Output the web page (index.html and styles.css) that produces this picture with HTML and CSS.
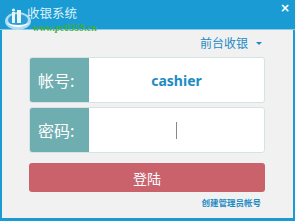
FILE: index.html
```html
<!DOCTYPE html>
<html>
<head>
<meta charset="utf-8">
<link rel="stylesheet" href="styles.css">
</head>
<body>
<div class="window">
  <div class="titlebar">
    <svg class="logo" width="30" height="26" viewBox="0 0 30 26">
      <ellipse cx="15" cy="15" rx="13" ry="9" fill="#bfe3f3" opacity="0.9"/>
      <ellipse cx="15" cy="14" rx="10" ry="6" fill="#2a9fd6"/>
      <rect x="9" y="6" width="3" height="11" fill="#e8f6fc"/>
      <rect x="14" y="4" width="4" height="13" fill="#e8f6fc"/>
      <circle cx="10.5" cy="4" r="1.6" fill="#e8f6fc"/>
      <path d="M3 17 Q15 25 27 17 Q15 21 3 17Z" fill="#ffffff"/>
    </svg>
    <span class="title">收银系统</span>
    <span class="watermark">www.pc0359.cn</span>
    <span class="close">×</span>
  </div>
  <div class="content">
    <div class="mode">前台收银 <span class="caret"></span></div>
    <div class="form">
      <div class="row">
        <div class="label">帐号:</div>
        <div class="field user">cashier</div>
      </div>
      <div class="row">
        <div class="label">密码:</div>
        <div class="field"><span class="cursor"></span></div>
      </div>
      <div class="btn">登陆</div>
      <div class="link">创建管理员帐号</div>
    </div>
  </div>
</div>
</body>
</html>
```

FILE: styles.css
```css
* { box-sizing: border-box; }
html, body { margin: 0; padding: 0; }
body {
  width: 295px;
  height: 221px;
  overflow: hidden;
  font-family: "Noto Sans CJK SC", "Noto Sans", sans-serif;
  background: #f0f0f0;
}
.window {
  width: 295px;
  height: 221px;
  display: flex;
  flex-direction: column;
  border: 2px solid #1a9bd3;
  border-top: none;
  border-bottom-width: 3px;
  background: #f1f1f1;
}
.titlebar {
  height: 30px;
  margin: 0 -2px;
  background: #1a9bd3;
  position: relative;
  border-bottom: 1px solid #8fcbe6;
}
.logo { position: absolute; left: 3px; top: 6px; }
.title {
  position: absolute;
  left: 27px;
  top: 6px;
  color: #dff2fb;
  font-family: "Noto Sans CJK SC", serif;
  font-size: 12.5px;
  line-height: 14px;
}
.watermark {
  position: absolute;
  left: 33px;
  top: 24px;
  color: #3fae3a;
  font-family: "Liberation Serif", serif;
  font-size: 10px;
  font-weight: bold;
  font-style: italic;
  line-height: 8px;
}
.close {
  position: absolute;
  right: 5px;
  top: 0px;
  color: #ffffff;
  font-family: "DejaVu Sans", sans-serif;
  font-size: 12px;
  line-height: 16px;
  font-weight: bold;
}
.content {
  flex: 1;
  display: flex;
  flex-direction: column;
}
.mode {
  align-self: flex-end;
  margin-top: 4px;
  margin-right: 31px;
  color: #1d8bc3;
  font-size: 12px;
  line-height: 18px;
  display: flex;
  align-items: center;
  gap: 4px;
}
.caret {
  width: 0; height: 0;
  border-left: 3px solid transparent;
  border-right: 3px solid transparent;
  border-top: 3px solid #1d8bc3;
  margin-left: 4px;
}
.form {
  margin-left: 27px;
  width: 236px;
  margin-top: 5px;
  display: flex;
  flex-direction: column;
}
.row {
  height: 46px;
  display: flex;
  border-radius: 3px;
  border: 1px solid #d6e3e4;
  background: #ffffff;
  overflow: hidden;
  margin-bottom: 4px;
}
.label {
  width: 59px;
  background: #6eaeb1;
  color: #ffffff;
  font-family: "Noto Sans CJK SC", serif;
  font-size: 16px;
  display: flex;
  align-items: center;
  padding-left: 8px;
}
.field {
  flex: 1;
  display: flex;
  align-items: center;
  justify-content: center;
}
.user {
  color: #1d8bc3;
  font-family: "Noto Sans", sans-serif;
  font-weight: bold;
  font-size: 14px;
}
.cursor {
  width: 1px;
  height: 17px;
  background: #888;
}
.btn {
  margin-top: 6px;
  height: 29px;
  border-radius: 3px;
  background: #c9626b;
  color: #ffffff;
  font-size: 14px;
  display: flex;
  align-items: center;
  justify-content: center;
}
.link {
  align-self: flex-end;
  margin-right: 4px;
  margin-top: 3px;
  color: #1d8bc3;
  font-size: 8.5px;
  font-weight: bold;
  line-height: 14px;
}
```
